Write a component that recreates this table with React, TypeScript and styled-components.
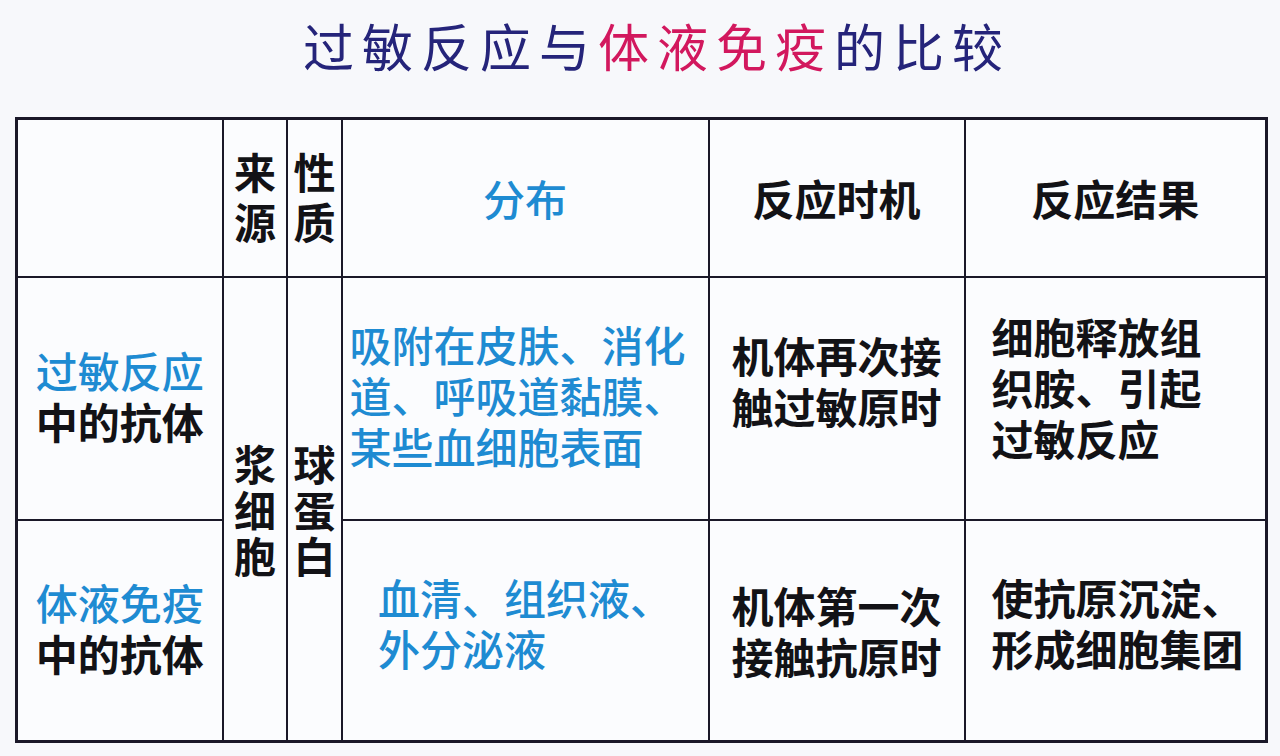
import styled, { createGlobalStyle } from "styled-components";

const GlobalStyle = createGlobalStyle`
  body {
    margin: 0;
    background: #f7f8fb;
    font-family: "Noto Sans CJK SC", "Noto Sans", sans-serif;
  }
`;

const Page = styled.div`
  width: 1280px;
  height: 756px;
  overflow: hidden;
  display: flex;
  flex-direction: column;
  align-items: flex-start;
`;

const Title = styled.h1`
  align-self: stretch;
  margin: 0;
  height: 117px;
  display: flex;
  justify-content: center;
  align-items: center;
  padding: 0 0 28px 34px;
  box-sizing: border-box;
  font-size: 51px;
  font-weight: 400;
  letter-spacing: 8px;
  color: #25247a;
`;

const Pink = styled.span`
  color: #d2185e;
`;

const Table = styled.table`
  margin-left: 15px;
  width: 1250px;
  border-collapse: collapse;
  table-layout: fixed;
  background: #fbfcfe;
  border: 3px solid #1a1828;
`;

const Row = styled.tr<{ $h: number }>`
  height: ${(p) => p.$h}px;
`;

const Cell = styled.td<{
  $blue?: boolean;
  $pad?: number;
  $lift?: number;
  $drop?: number;
}>`
  border: 2px solid #1a1828;
  padding: ${(p) => p.$drop ?? 0}px 0 ${(p) => p.$lift ?? 0}px
    ${(p) => p.$pad ?? 0}px;
  text-align: ${(p) => (p.$pad ? "left" : "center")};
  vertical-align: middle;
  font-size: 42px;
  line-height: 51px;
  font-weight: ${(p) => (p.$blue ? 500 : 700)};
  color: ${(p) => (p.$blue ? "#1e8bd2" : "#121216")};
`;

// narrow columns read top to bottom, one glyph under the other
const Upright = styled.div<{ $gap: number }>`
  display: inline-block;
  writing-mode: vertical-rl;
  text-orientation: upright;
  letter-spacing: ${(p) => p.$gap}px;
  line-height: 42px;
`;

const Block = styled.div`
  display: inline-block;
  text-align: left;
`;

const Blue = styled.span`
  color: #1e8bd2;
  font-weight: 500;
`;

export default function App() {
  return (
    <Page>
      <GlobalStyle />
      <Title>
        过敏反应与<Pink>体液免疫</Pink>的比较
      </Title>
      <Table>
        <colgroup>
          <col style={{ width: 206 }} />
          <col style={{ width: 64 }} />
          <col style={{ width: 55 }} />
          <col style={{ width: 367 }} />
          <col style={{ width: 256 }} />
          <col style={{ width: 302 }} />
        </colgroup>
        <tbody>
          <Row $h={158}>
            <Cell />
            <Cell $drop={16}>
              <Upright $gap={8}>来源</Upright>
            </Cell>
            <Cell $drop={16}>
              <Upright $gap={8}>性质</Upright>
            </Cell>
            <Cell $blue>分布</Cell>
            <Cell>反应时机</Cell>
            <Cell>反应结果</Cell>
          </Row>
          <Row $h={243}>
            <Cell $lift={6}>
              <Blue>过敏反应</Blue>
              <br />
              中的抗体
            </Cell>
            <Cell rowSpan={2} $drop={16}>
              <Upright $gap={4}>浆细胞</Upright>
            </Cell>
            <Cell rowSpan={2} $drop={16}>
              <Upright $gap={4}>球蛋白</Upright>
            </Cell>
            <Cell $blue $pad={7} $lift={8}>
              吸附在皮肤、消化
              <br />
              道、呼吸道黏膜、
              <br />
              某些血细胞表面
            </Cell>
            <Cell $lift={36}>
              <Block>
                机体再次接
                <br />
                触过敏原时
              </Block>
            </Cell>
            <Cell $pad={26} $lift={24}>
              细胞释放组
              <br />
              织胺、引起
              <br />
              过敏反应
            </Cell>
          </Row>
          <Row $h={222}>
            <Cell $lift={6}>
              <Blue>体液免疫</Blue>
              <br />
              中的抗体
            </Cell>
            <Cell $blue $lift={16}>
              <Block>
                血清、组织液、
                <br />
                外分泌液
              </Block>
            </Cell>
            <Cell>
              <Block>
                机体第一次
                <br />
                接触抗原时
              </Block>
            </Cell>
            <Cell $pad={26} $lift={16}>
              使抗原沉淀、
              <br />
              形成细胞集团
            </Cell>
          </Row>
        </tbody>
      </Table>
    </Page>
  );
}
